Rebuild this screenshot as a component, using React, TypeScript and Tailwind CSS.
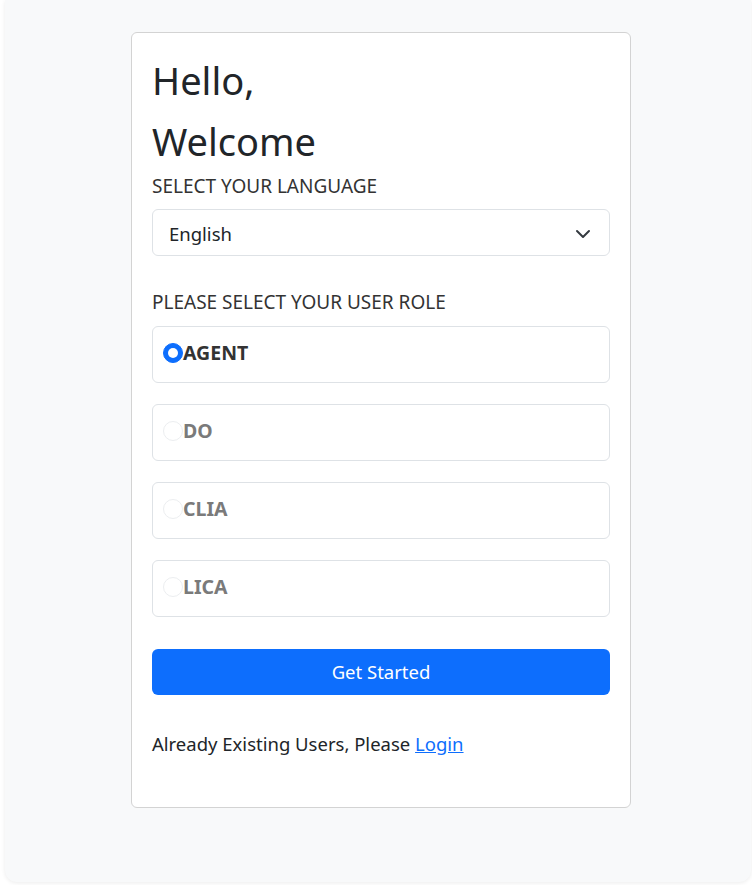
import { useState } from 'react';

const roles = ['AGENT', 'DO', 'CLIA', 'LICA'];

const RoleOption = ({
  label,
  checked,
  onSelect,
}: {
  label: string;
  checked: boolean;
  onSelect: () => void;
}) => (
  <label
    className="flex h-[57px] items-start rounded-md border border-[#dee2e6] bg-white pl-[10px] pt-[16px] cursor-pointer"
    onClick={onSelect}
  >
    <span className="flex items-center">
      <span
        className={`inline-flex h-[20px] w-[20px] items-center justify-center rounded-full border ${
          checked ? 'border-[#0d6efd] bg-[#0d6efd]' : 'border-[#eceef0] bg-white'
        }`}
      >
        {checked && <span className="h-[10px] w-[10px] rounded-full bg-white"></span>}
      </span>
      <span
        className={`text-[19.5px] font-bold leading-[20px] ${
          checked ? 'text-[#333333]' : 'text-[#7a7a7a]'
        }`}
      >
        {label}
      </span>
    </span>
  </label>
);

export default function App() {
  const [role, setRole] = useState('AGENT');

  return (
    <div className="min-h-screen bg-white pl-[5px] pr-px pb-[3px] font-['Segoe_UI','Noto_Sans',sans-serif] text-[#212529]">
      <div className="rounded-b-xl bg-[#f8f9fa] pt-8 pb-[74px] shadow-[0_1px_4px_rgba(0,0,0,0.08)]">
        <div className="ml-[126px] w-[500px] rounded-md border border-[#d3d3d3] bg-white px-5 pt-[23px] pb-[50px]">
          <h1 className="text-[38px] leading-[48px] font-normal">Hello,</h1>
          <h1 className="mt-[13px] text-[38px] leading-[48px] font-normal">Welcome</h1>

          <p className="mt-[8px] text-[19px] leading-[27px] text-[#333333]">SELECT YOUR LANGUAGE</p>
          <div className="mt-[9px] flex h-[47px] items-center justify-between rounded-md border border-[#dee2e6] pl-4 pr-[18px] pt-[2px]">
            <span className="text-[18.5px]">English</span>
            <svg width="16" height="12" viewBox="0 0 16 12" fill="none">
              <path
                d="M2 3l6 6 6-6"
                stroke="#343a40"
                strokeWidth="2"
                strokeLinecap="round"
                strokeLinejoin="round"
              />
            </svg>
          </div>

          <p className="mt-[33px] text-[19px] leading-[27px] text-[#333333]">PLEASE SELECT YOUR USER ROLE</p>
          <div className="mt-[10px] flex flex-col gap-[21px]">
            {roles.map((r) => (
              <RoleOption key={r} label={r} checked={role === r} onSelect={() => setRole(r)} />
            ))}
          </div>

          <button className="mt-[32px] h-[46px] w-full rounded-md bg-[#0d6efd] text-[18.5px] text-white">
            Get Started
          </button>

          <p className="mt-[35px] text-[18.5px] leading-[27px]">
            Already Existing Users, Please{' '}
            <a href="#" className="text-[#0d6efd] underline">
              Login
            </a>
          </p>
        </div>
      </div>
    </div>
  );
}
